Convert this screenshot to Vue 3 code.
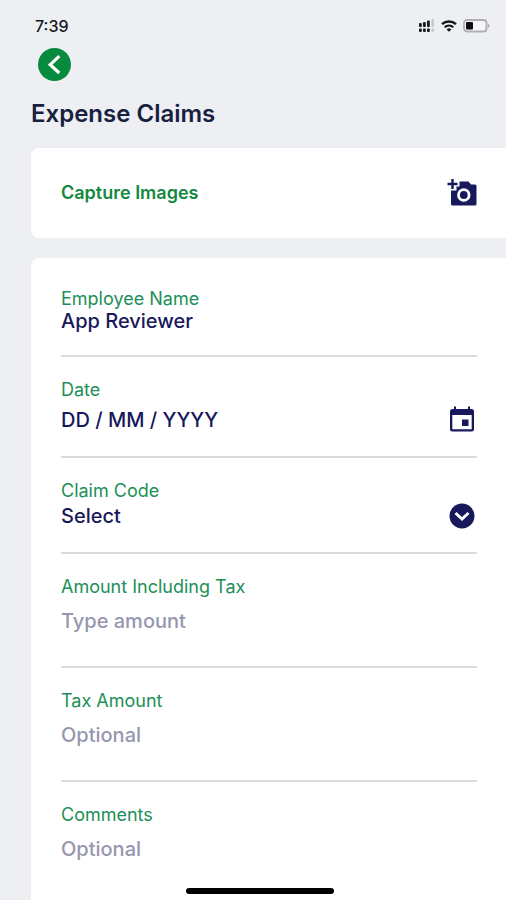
<script setup>
import { ref } from 'vue'

const employee = ref('App Reviewer')
const date = ref('')
const claimCode = ref('')
const amount = ref('')
const tax = ref('')
const comments = ref('')
</script>

<template>
  <div class="screen">
    <div class="status">
      <span class="time">7:39</span>
      <div class="indicators">
        <svg width="17" height="14" viewBox="0 0 17 14" aria-hidden="true">
          <g fill="#15171c">
            <rect x="1" y="4" width="2.800" height="4" rx="1" />
            <rect x="5" y="3" width="2.800" height="5" rx="1" />
            <rect x="9" y="1.500" width="2.800" height="6.500" rx="1" />
            <rect x="1" y="9.500" width="2.800" height="3.500" rx="1" />
            <rect x="5" y="9.500" width="2.800" height="3.500" rx="1" />
            <rect x="9" y="9.500" width="2.800" height="3.500" rx="1" />
          </g>
          <g fill="#c3c4c9">
            <rect x="13.500" y="0" width="2.300" height="8" rx="1" />
            <rect x="13.500" y="9.500" width="2.300" height="3.500" rx="1" />
          </g>
        </svg>
        <svg width="16" height="12" viewBox="0 0 16 12" fill="none" stroke="#15171c" aria-hidden="true">
          <path d="M1 4.200a10.400 10.400 0 0 1 14 0" stroke-width="2.400" />
          <path d="M3.600 7.300a6.600 6.600 0 0 1 8.800 0" stroke-width="2" />
          <path d="M8 11.800 5.600 9.400a3.500 3.500 0 0 1 4.800 0z" fill="#15171c" stroke="none" />
        </svg>
        <svg width="27" height="14" viewBox="0 0 27 14" aria-hidden="true">
          <rect x="1" y="1" width="22.500" height="11.500" rx="3" fill="#f6f6f8" stroke="#aeafb4" stroke-width="1.800" />
          <rect x="3" y="3" width="7" height="7.500" rx="1" fill="#0b0c10" />
          <path d="M24.800 4.500c2.200.7 2.200 3.800 0 4.500z" fill="#aeafb4" />
        </svg>
      </div>
    </div>

    <header>
      <button class="back" type="button" aria-label="Back">
        <svg width="33" height="33" viewBox="0 0 33 33" aria-hidden="true">
          <circle cx="16.500" cy="16.500" r="16.500" fill="#078a3e" />
          <path d="M21.300 8.200 12.200 16.700l9.100 8.300" fill="none" stroke="#fff" stroke-width="3.200" />
        </svg>
      </button>
      <h1>Expense Claims</h1>
    </header>

    <main>
      <button class="card capture" type="button">
        <span>Capture Images</span>
        <svg width="30" height="28" viewBox="0 0 30 28" aria-hidden="true">
          <path d="M12.500 2.500h9l2.500 3h4A1.500 1.500 0 0 1 29.500 7v18a1.500 1.500 0 0 1-1.500 1.500H5.500A1.500 1.500 0 0 1 4 25V11.500h5.500V7.500h3z" fill="#17195c" />
          <path d="M5.500 0v10M0.500 5h10" stroke="#17195c" stroke-width="2.400" />
          <circle cx="16.800" cy="16" r="5.300" fill="#17195c" stroke="#fff" stroke-width="2.800" />
        </svg>
      </button>

      <form class="card form" @submit.prevent>
        <div class="field">
          <label for="employee">Employee Name</label>
          <input id="employee" v-model="employee" class="value" type="text" readonly />
        </div>

        <div class="field date">
          <label for="date">Date</label>
          <div class="row">
            <input id="date" v-model="date" class="value filled" type="text" placeholder="DD / MM / YYYY" />
            <button class="icon" type="button" aria-label="Choose date">
              <svg width="26" height="28" viewBox="0 0 26 28" aria-hidden="true">
                <path fill-rule="evenodd" d="M5 .5h2V3h12V.5h2V3h1.500A2.500 2.500 0 0 1 25 5.500v17.500a2.500 2.500 0 0 1-2.500 2.500h-19A2.500 2.500 0 0 1 1 23V5.500A2.500 2.500 0 0 1 3.500 3H5zM3.300 9v14.200h19.400V9z" fill="#17195c" />
                <rect x="13" y="13.500" width="6.500" height="6.500" fill="#17195c" />
              </svg>
            </button>
          </div>
        </div>

        <div class="field code">
          <label for="code">Claim Code</label>
          <div class="row">
            <select id="code" v-model="claimCode" class="value">
              <option value="">Select</option>
            </select>
            <svg class="icon" width="26" height="26" viewBox="0 0 26 26" aria-hidden="true">
              <circle cx="13" cy="13" r="12.500" fill="#17195c" />
              <path d="M6.500 10 13 16l6.500-6" fill="none" stroke="#fff" stroke-width="3" />
            </svg>
          </div>
        </div>

        <div class="field entry">
          <label for="amount">Amount Including Tax</label>
          <input id="amount" v-model="amount" class="value" type="text" inputmode="decimal" placeholder="Type amount" />
        </div>

        <div class="field entry">
          <label for="tax">Tax Amount</label>
          <input id="tax" v-model="tax" class="value" type="text" inputmode="decimal" placeholder="Optional" />
        </div>

        <div class="field entry">
          <label for="comments">Comments</label>
          <input id="comments" v-model="comments" class="value" type="text" placeholder="Optional" />
        </div>
      </form>
    </main>

    <div class="home"></div>
  </div>
</template>

<style>
body {
  margin: 0;
  background: #edeff3;
}
</style>

<style scoped>
.screen {
  min-height: 100vh;
  display: flex;
  flex-direction: column;
  box-sizing: border-box;
  background: #edeff3;
  font-family: Inter, "Liberation Sans", sans-serif;
  color: #17195c;
}

.status {
  display: flex;
  justify-content: space-between;
  align-items: center;
  height: 20px;
  padding: 16px 16px 0 35px;
}

.time {
  font-size: 16px;
  font-weight: 500;
  line-height: 20px;
  color: #15171c;
}

.indicators {
  display: flex;
  align-items: center;
  gap: 6px;
}

header {
  display: flex;
  flex-direction: column;
  align-items: flex-start;
  padding: 12px 31px 20px;
}

button,
input,
select {
  margin: 0;
  padding: 0;
  border: 0;
  background: none;
  font-family: inherit;
  color: inherit;
}

button {
  cursor: pointer;
}

.back {
  display: flex;
  margin-left: 7px;
}

h1 {
  margin: 19px 0 0;
  font-size: 24px;
  font-weight: 600;
  line-height: 28px;
  color: #17213f;
}

main {
  flex: 1;
  display: flex;
  flex-direction: column;
  gap: 20px;
  padding-left: 31px;
}

.card {
  padding: 0 29px 0 30px;
  border-radius: 8px 0 0 8px;
  background: #fff;
}

.capture {
  display: flex;
  justify-content: space-between;
  align-items: center;
  padding: 31px 29px 31px 30px;
  font-size: 18px;
  font-weight: 600;
  line-height: 28px;
  color: #14883f;
}

.form {
  flex: 1;
  padding-top: 8px;
  border-bottom-left-radius: 0;
}

.field {
  display: flex;
  flex-direction: column;
  padding: 23px 0 22px;
  border-bottom: 2px solid #dadada;
}

.field:last-child {
  padding-bottom: 0;
  border-bottom: 0;
}

label {
  font-size: 18px;
  line-height: 20px;
  color: #218f57;
}

.value {
  flex: 1;
  min-width: 0;
  height: 24px;
  font-size: 20px;
  font-weight: 500;
  line-height: 24px;
  appearance: none;
  outline-offset: 4px;
}

.value::placeholder {
  color: #9796af;
  opacity: 1;
}

.filled::placeholder {
  color: #17195c;
}

.row {
  display: flex;
  align-items: center;
  height: 24px;
}

.icon {
  display: flex;
  flex: none;
  margin-right: 2px;
}

.date {
  gap: 8px;
  padding-bottom: 24px;
}

.code {
  gap: 3px;
  padding-bottom: 24px;
}

.entry {
  gap: 12px;
  padding-bottom: 33px;
}

.home {
  position: fixed;
  bottom: 6px;
  left: 14px;
  right: 0;
  width: 148px;
  height: 6px;
  margin: 0 auto;
  border-radius: 3px;
  background: #000;
}
</style>
